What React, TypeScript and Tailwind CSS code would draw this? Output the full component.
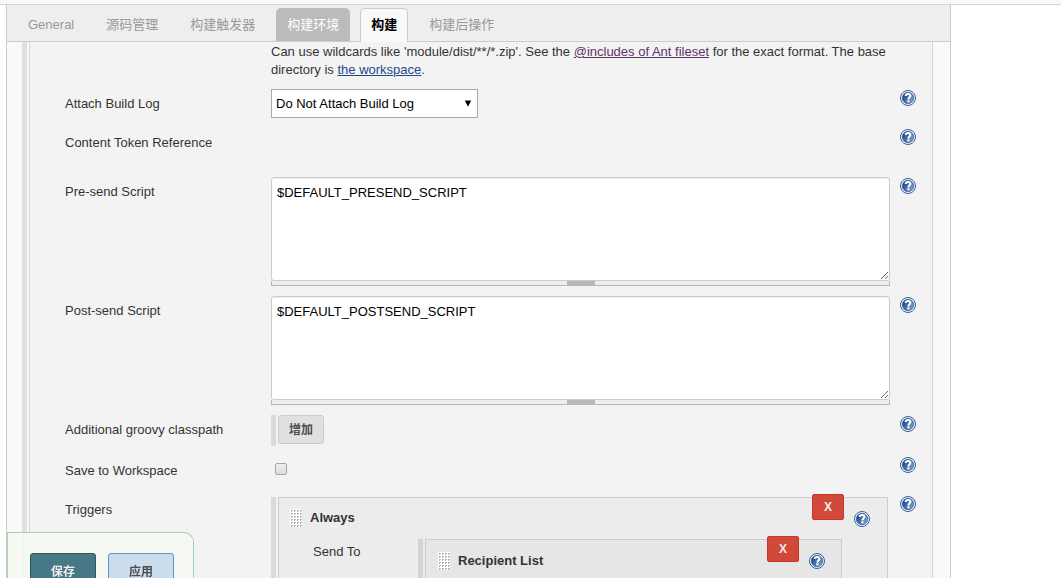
import { useId, useState } from "react";
import type { ReactNode } from "react";

const tabs = ["General", "源码管理", "构建触发器", "构建环境", "构建", "构建后操作"];

function HelpButton({ topic }: { topic: string }) {
  const id = useId();
  return (
    <button type="button" aria-label={`Help for ${topic}`} className="block size-4 shrink-0">
      <svg viewBox="0 0 16 16" className="block size-4">
        <defs>
          <linearGradient id={id} x1="0" y1="0.2" x2="1" y2="0.8">
            <stop offset="0.1" stopColor="#204a87" />
            <stop offset="1" stopColor="#86a5cf" />
          </linearGradient>
        </defs>
        <circle cx="8" cy="8" r="7.5" fill="#f4f7fb" stroke="#34609c" strokeWidth="1" />
        <circle cx="8" cy="8" r="5.7" fill={`url(#${id})`} stroke="#3465a4" strokeWidth="0.8" />
        <path
          d="M5.7 6.1C5.7 4.6 6.7 3.9 8.1 3.9S10.4 4.7 10.4 5.9C10.4 7.3 8.4 7.5 8.4 9.5"
          fill="none"
          stroke="#fff"
          strokeWidth="2"
        />
        <rect x="7.3" y="10.3" width="2.2" height="2" fill="#fff" />
      </svg>
    </button>
  );
}

function Grip() {
  const dots = [];
  for (let y = 0; y < 6; y++) {
    for (let x = 0; x < 4; x++) {
      dots.push(<path key={`${x}-${y}`} d={`M${x * 3 + 1} ${y * 3 + 1}h2v1h-1v1h-1z`} fill="#b5b5b0" />);
    }
  }
  return (
    <svg viewBox="0 0 12 18" className="block h-[18px] w-3 shrink-0 cursor-move" aria-hidden="true">
      <rect width="12" height="18" fill="#fff" />
      {dots}
    </svg>
  );
}

function Row({
  label,
  htmlFor,
  size,
  children,
}: {
  label: string;
  htmlFor?: string;
  size: string;
  children?: ReactNode;
}) {
  return (
    <div className={`flex items-start ${size}`}>
      <div className="w-[206px] shrink-0 pt-[6px]">
        {htmlFor ? <label htmlFor={htmlFor}>{label}</label> : <span>{label}</span>}
      </div>
      <div className="mr-[10px] min-w-0 flex-1">{children}</div>
      <div className="pt-px">
        <HelpButton topic={label} />
      </div>
    </div>
  );
}

function ScriptBox({ id, value }: { id: string; value: string }) {
  return (
    <div>
      <textarea
        id={id}
        defaultValue={value}
        spellCheck={false}
        className="block h-[104px] w-full resize rounded-[3px] border border-[#ccc] bg-white px-[5px] py-[6px] text-[13px] leading-[18px] text-black shadow-[inset_0_1px_1px_rgba(0,0,0,0.075)] outline-none"
      />
      <div className="flex h-[5px] justify-center border-x border-b border-[#b8b8b5] bg-[#eee]">
        <div className="w-7 bg-[#b8b8b5]" />
      </div>
    </div>
  );
}

function DeleteButton({ name }: { name: string }) {
  return (
    <button
      type="button"
      aria-label={`Delete ${name}`}
      className="h-[26px] w-8 shrink-0 rounded-[2px] border border-[#c0392b] bg-[#d24939] text-[12px] font-bold text-[#eee]"
    >
      X
    </button>
  );
}

export default function App() {
  const [active, setActive] = useState(4);
  return (
    <div className="flex h-screen flex-col overflow-hidden bg-white font-['Liberation_Sans','Noto_Sans_CJK_SC',sans-serif] text-[13px] leading-[18px] text-[#333]">
      <div className="h-[5px] shrink-0 border-b border-[#d3d7cf] bg-[#f6faf2]" />
      <main className="mr-[110px] ml-[6px] flex min-h-0 flex-1 flex-col border-x border-[#ccc] bg-[#f9f9f9]">
        <nav className="flex h-[37px] shrink-0 items-end gap-[10px] border-b border-[#ccc] bg-[#eee] pl-[10px]">
          {tabs.map((tab, i) => (
            <button
              key={tab}
              type="button"
              onClick={() => setActive(i)}
              className={
                i === active
                  ? "-mb-px h-[34px] rounded-t-[5px] border border-b-0 border-[#ccc] bg-[#f9f9f9] px-[10px] pb-[2px] font-bold text-black"
                  : i === 3
                    ? "h-[33px] rounded-t-[5px] bg-[#bbb] px-[11px] text-white"
                    : "h-[33px] px-[11px] text-[#999]"
              }
            >
              {tab}
            </button>
          ))}
        </nav>

        <div className="flex min-h-0 flex-1 overflow-hidden pr-[17px] pl-[15px]">
          <div className="mr-[2px] w-[5px] shrink-0 bg-[#e0e0e0]" />
          <div className="flex min-w-0 flex-1 flex-col border-x border-[#d6d6d6] bg-[#f3f3f3] pr-4 pl-[35px]">
            <p className="mt-px mb-[10px] ml-[206px] shrink-0">
              Can use wildcards like 'module/dist/**/*.zip'. See the{" "}
              <a href="#fileset" className="text-[#5c3566] underline">
                @includes of Ant fileset
              </a>{" "}
              for the exact format. The base directory is{" "}
              <a href="#workspace" className="text-[#204a87] underline">
                the workspace
              </a>
              .
            </p>

            <Row label="Attach Build Log" htmlFor="attach-log" size="h-[39px] shrink-0">
              <div className="relative w-[207px]">
                <select
                  id="attach-log"
                  className="block h-[29px] w-full appearance-none border border-[#a9a9a9] bg-white px-1 text-[13px] text-black"
                >
                  <option>Do Not Attach Build Log</option>
                  <option>Attach Build Log</option>
                  <option>Compress and Attach Build Log</option>
                </select>
                <svg viewBox="0 0 8 7" className="pointer-events-none absolute top-[11px] right-[6px] h-[7px] w-2">
                  <path d="M0.8 0.5H7.2L4 6.8z" fill="#000" />
                </svg>
              </div>
            </Row>

            <Row label="Content Token Reference" size="h-[49px] shrink-0" />

            <Row label="Pre-send Script" htmlFor="presend" size="h-[119px] shrink-0">
              <ScriptBox id="presend" value="$DEFAULT_PRESEND_SCRIPT" />
            </Row>

            <Row label="Post-send Script" htmlFor="postsend" size="h-[119px] shrink-0">
              <ScriptBox id="postsend" value="$DEFAULT_POSTSEND_SCRIPT" />
            </Row>

            <Row label="Additional groovy classpath" size="h-[41px] shrink-0">
              <div className="flex items-start gap-[2px]">
                <div className="h-[31px] w-[5px] bg-[#dadada]" />
                <button
                  type="button"
                  className="h-[29px] rounded-[3px] border border-[#ccc] bg-[#e0e0e0] px-[10px] text-[12px] font-bold text-[#4d4d4d]"
                >
                  增加
                </button>
              </div>
            </Row>

            <Row label="Save to Workspace" htmlFor="save-workspace" size="h-[39px] shrink-0">
              <input
                id="save-workspace"
                type="checkbox"
                className="mt-[7px] ml-1 block size-3 appearance-none rounded-[2px] border border-[#a5a5a5] bg-linear-to-b from-[#eee] to-[#dcdcdc] checked:bg-[#3b78c4]"
              />
            </Row>

            <Row label="Triggers" size="">
              <div className="mt-[2px] mr-[2px] flex gap-[2px]">
                <div className="w-[5px] shrink-0 bg-[#dadada]" />
                <section className="min-h-[200px] min-w-0 flex-1 border border-[#ccc] bg-[#ececec] pr-[17px] pl-[11px]">
                  <header className="flex h-[41px] items-start">
                    <div className="mt-[11px] flex flex-1 items-center gap-2">
                      <Grip />
                      <b>Always</b>
                    </div>
                    <div className="-mt-1 mr-[10px]">
                      <DeleteButton name="Always" />
                    </div>
                    <div className="mt-[13px]">
                      <HelpButton topic="Always" />
                    </div>
                  </header>
                  <div className="mr-7 flex gap-[2px] pl-[23px]">
                    <span className="w-[103px] shrink-0 pt-1">Send To</span>
                    <div className="w-[5px] shrink-0 bg-[#d4d4d4]" />
                    <section className="min-h-[150px] min-w-0 flex-1 border border-[#ccc] bg-[#e6e6e6] pr-4 pl-3">
                      <header className="flex items-start">
                        <div className="mt-3 flex flex-1 items-center gap-2">
                          <Grip />
                          <b>Recipient List</b>
                        </div>
                        <div className="-mt-1 mr-[10px]">
                          <DeleteButton name="Recipient List" />
                        </div>
                        <div className="mt-[13px]">
                          <HelpButton topic="Recipient List" />
                        </div>
                      </header>
                    </section>
                  </div>
                </section>
              </div>
            </Row>
          </div>
        </div>
      </main>

      <div className="fixed bottom-0 left-[7px] flex h-[46px] items-start gap-3 overflow-hidden rounded-tr-[10px] border border-b-0 border-[#a8cfb8] bg-[#f6faf2]/90 pt-5 pr-[19px] pl-[22px] text-[12px] font-bold">
        <button type="submit" className="h-[38px] w-[66px] shrink-0 rounded-[3px] border border-[#2f5663] bg-[#467886] text-[#eee]">
          保存
        </button>
        <button type="button" className="h-[38px] w-[66px] shrink-0 rounded-[3px] border border-[#5c94d0] bg-[#ccdded] text-[#4d4d4d]">
          应用
        </button>
      </div>
    </div>
  );
}
